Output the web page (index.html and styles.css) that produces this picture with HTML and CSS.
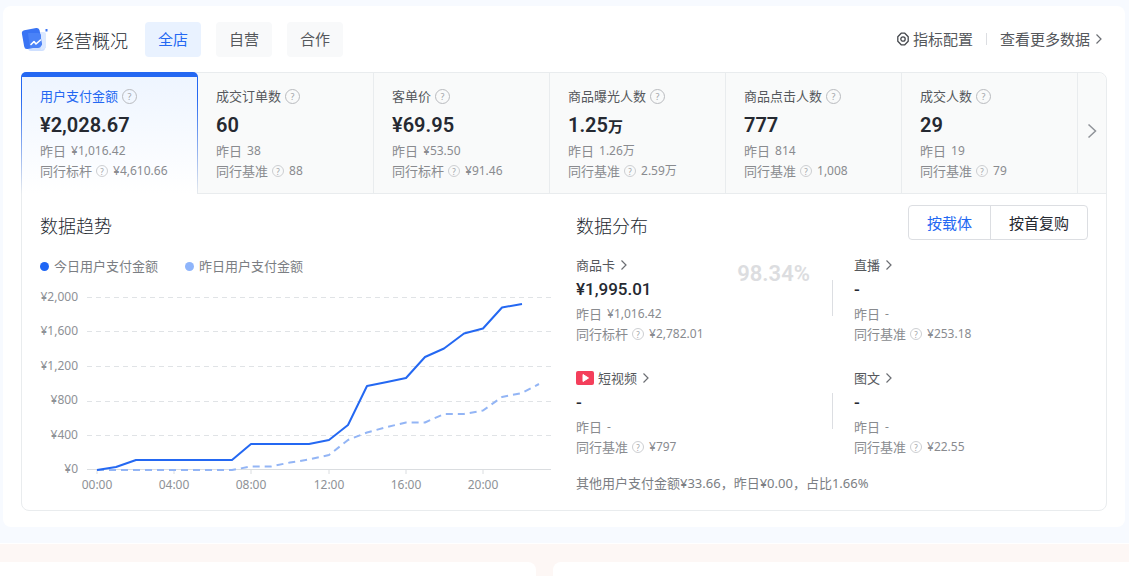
FILE: index.html
```html
<!DOCTYPE html>
<html lang="zh-CN">
<head>
    <meta charset="UTF-8">
    <meta name="viewport" content="width=device-width, initial-scale=1.0">
    <title>经营概况</title>
    <link rel="stylesheet" href="styles.css">
</head>
<body>

    <main class="page">
        <section class="overview">
            <header class="overview-header">
                <svg class="logo" viewBox="0 0 28 26" aria-hidden="true">
                    <rect x="7" y="7" width="17" height="17" rx="3" fill="#cfe0ff"/>
                    <path d="M18 5h5a2 2 0 0 1 2 2v14l-5 2z" fill="#dbe8ff"/>
                    <rect x="2" y="2" width="18" height="19" rx="3" fill="#3a74f4" transform="rotate(-10 11 12)"/>
                    <path d="M7 6h10a3 3 0 0 1 3 3v9a3 3 0 0 1-3 3H9z" fill="#4a82f7"/>
                    <path d="M10 17.500l3-3 2 2.500 4.500-4" fill="none" stroke="#fff" stroke-width="1.600" stroke-linecap="round" stroke-linejoin="round"/>
                    <rect x="24.500" y="2" width="2" height="2.500" fill="#3a74f4"/>
                </svg>
                <h1>经营概况</h1>
                <nav class="tabs">
                    <button class="tab active">全店</button>
                    <button class="tab">自营</button>
                    <button class="tab">合作</button>
                </nav>
                <div class="header-links">
                    <a href="#config">
                        <svg class="config-icon" viewBox="0 0 14 14" aria-hidden="true">
                            <path d="M5.200 1.200h3.600l3.400 3.500v4.600l-3.400 3.500H5.200L1.800 9.300V4.700z" stroke-linejoin="round"/>
                            <circle cx="7" cy="7" r="2.200"/>
                        </svg>指标配置</a>
                    <span class="split"></span>
                    <a href="#more">查看更多数据<svg class="chevron" viewBox="0 0 8 12" aria-hidden="true"><path d="M1.500 1.500L6 6l-4.500 4.500"/></svg></a>
                </div>
            </header>

            <div class="panel">
                <div class="metrics">
                    <button class="metric selected">
                        <span class="metric-name">用户支付金额<i class="help">?</i></span>
                        <span class="metric-value">¥2,028.67</span>
                        <span class="sub">昨日<b>¥1,016.42</b></span>
                        <span class="sub">同行标杆<i class="help small">?</i><b>¥4,610.66</b></span>
                    </button>
                    <button class="metric">
                        <span class="metric-name">成交订单数<i class="help">?</i></span>
                        <span class="metric-value">60</span>
                        <span class="sub">昨日<b>38</b></span>
                        <span class="sub">同行基准<i class="help small">?</i><b>88</b></span>
                    </button>
                    <button class="metric">
                        <span class="metric-name">客单价<i class="help">?</i></span>
                        <span class="metric-value">¥69.95</span>
                        <span class="sub">昨日<b>¥53.50</b></span>
                        <span class="sub">同行标杆<i class="help small">?</i><b>¥91.46</b></span>
                    </button>
                    <button class="metric">
                        <span class="metric-name">商品曝光人数<i class="help">?</i></span>
                        <span class="metric-value">1.25<span class="unit">万</span></span>
                        <span class="sub">昨日<b>1.26万</b></span>
                        <span class="sub">同行基准<i class="help small">?</i><b>2.59万</b></span>
                    </button>
                    <button class="metric">
                        <span class="metric-name">商品点击人数<i class="help">?</i></span>
                        <span class="metric-value">777</span>
                        <span class="sub">昨日<b>814</b></span>
                        <span class="sub">同行基准<i class="help small">?</i><b>1,008</b></span>
                    </button>
                    <button class="metric">
                        <span class="metric-name">成交人数<i class="help">?</i></span>
                        <span class="metric-value">29</span>
                        <span class="sub">昨日<b>19</b></span>
                        <span class="sub">同行基准<i class="help small">?</i><b>79</b></span>
                    </button>
                    <button class="next" aria-label="下一页">
                        <svg viewBox="0 0 10 16" aria-hidden="true"><path d="M1.500 1.500L8.500 8l-7 6.500"/></svg>
                    </button>
                </div>

                <div class="details">
                    <section class="trend">
                        <div class="section-head">
                            <h2>数据趋势</h2>
                        </div>
                        <div class="legend">
                            <span class="legend-item"><i class="dot"></i>今日用户支付金额</span>
                            <span class="legend-item"><i class="dot light"></i>昨日用户支付金额</span>
                        </div>
                        <svg class="chart" viewBox="0 0 512 208" role="img" aria-label="数据趋势">
                            <g class="grid">
                                <path d="M47 11.500H511"/>
                                <path d="M47 45.500H511"/>
                                <path d="M47 80.500H511"/>
                                <path d="M47 115.500H511"/>
                                <path d="M47 149.500H511"/>
                            </g>
                            <path class="axis" d="M47 183.500H511M57 184v4M134 184v4M211 184v4M289 184v4M366 184v4M443 184v4"/>
                            <g class="y-labels">
                                <text x="38" y="15">¥2,000</text>
                                <text x="38" y="49">¥1,600</text>
                                <text x="38" y="84">¥1,200</text>
                                <text x="38" y="118">¥800</text>
                                <text x="38" y="153">¥400</text>
                                <text x="38" y="187">¥0</text>
                            </g>
                            <g class="x-labels">
                                <text x="57" y="203">00:00</text>
                                <text x="134" y="203">04:00</text>
                                <text x="211" y="203">08:00</text>
                                <text x="289" y="203">12:00</text>
                                <text x="366" y="203">16:00</text>
                                <text x="443" y="203">20:00</text>
                            </g>
                            <polyline class="line yesterday" points="57,184 192,184 211,180.500 231,180.500 250,176.500 269,173.500 289,169 308,154 327,146.500 347,141 366,136.500 385,136.500 404,128 424,128 443,124.500 462,111 482,107 499,98"/>
                            <polyline class="line today" points="57,184 76,181 96,174 192,174 211,158 269,158 289,154 308,139 327,100 347,96 366,92 385,71 404,62.500 424,47.500 443,42.500 462,21.500 482,18"/>
                        </svg>
                    </section>

                    <section class="distribution">
                        <div class="section-head">
                            <h2>数据分布</h2>
                            <div class="switch">
                                <button class="on">按载体</button>
                                <button>按首复购</button>
                            </div>
                        </div>
                        <div class="stats">
                            <div class="stat">
                                <a class="stat-name" href="#card">商品卡<svg class="chevron" viewBox="0 0 8 12" aria-hidden="true"><path d="M1.500 1.500L6 6l-4.500 4.500"/></svg></a>
                                <span class="stat-value">¥1,995.01</span>
                                <span class="sub">昨日<b>¥1,016.42</b></span>
                                <span class="sub">同行标杆<i class="help small">?</i><b>¥2,782.01</b></span>
                                <span class="percent">98.34%</span>
                            </div>
                            <div class="stat">
                                <a class="stat-name" href="#live">直播<svg class="chevron" viewBox="0 0 8 12" aria-hidden="true"><path d="M1.500 1.500L6 6l-4.500 4.500"/></svg></a>
                                <span class="stat-value">-</span>
                                <span class="sub">昨日<b>-</b></span>
                                <span class="sub">同行基准<i class="help small">?</i><b>¥253.18</b></span>
                            </div>
                            <div class="stat">
                                <a class="stat-name" href="#video"><svg class="video-icon" viewBox="0 0 18 14" aria-hidden="true"><rect width="18" height="14" rx="2" fill="#f43f5b"/><path d="M7 3.500v7l5.500-3.500z" fill="#fff" stroke="#fff" stroke-linejoin="round"/></svg>短视频<svg class="chevron" viewBox="0 0 8 12" aria-hidden="true"><path d="M1.500 1.500L6 6l-4.500 4.500"/></svg></a>
                                <span class="stat-value">-</span>
                                <span class="sub">昨日<b>-</b></span>
                                <span class="sub">同行基准<i class="help small">?</i><b>¥797</b></span>
                            </div>
                            <div class="stat">
                                <a class="stat-name" href="#article">图文<svg class="chevron" viewBox="0 0 8 12" aria-hidden="true"><path d="M1.500 1.500L6 6l-4.500 4.500"/></svg></a>
                                <span class="stat-value">-</span>
                                <span class="sub">昨日<b>-</b></span>
                                <span class="sub">同行基准<i class="help small">?</i><b>¥22.55</b></span>
                            </div>
                        </div>
                        <p class="note">其他用户支付金额¥33.66，昨日¥0.00，占比1.66%</p>
                    </section>
                </div>
            </div>
        </section>
    </main>

    <div class="next-row">
        <div class="next-card"></div>
        <div class="next-card"></div>
    </div>

</body>
</html>
```

FILE: styles.css
```css
* {
    box-sizing: border-box;
}

body {
    margin: 0;
    height: 100vh;
    display: flex;
    flex-direction: column;
    overflow: hidden;
    font-family: "Noto Sans", "Noto Sans CJK SC", sans-serif;
    font-size: 13px;
    line-height: 20px;
    color: #55585c;
    background-color: #fff;
}

h1, h2, p {
    margin: 0;
}

h1, h2 {
    font-family: "Noto Sans CJK SC", sans-serif;
    font-size: 18px;
    font-weight: 300;
    line-height: 24px;
    color: #252931;
}

button {
    font-family: inherit;
    font-size: 15px;
    padding: 0;
    border: none;
    background: none;
    cursor: pointer;
}

a {
    color: inherit;
    text-decoration: none;
}

.page {
    padding: 6px 4px 16px 3px;
    background-color: #f7faff;
}

.overview {
    padding: 16px 18px;
    background-color: #fff;
    border-radius: 8px;
}

/* Header */
.overview-header {
    display: flex;
    align-items: center;
    height: 35px;
    margin-bottom: 15px;
}

.logo {
    width: 28px;
    height: 26px;
    margin-right: 7px;
}

.tabs {
    display: flex;
    gap: 15px;
    margin-left: 17px;
}

.tab {
    height: 35px;
    padding: 0 13px 2px;
    border-radius: 4px;
    color: #55585c;
    background-color: #f8f9fa;
}

.tab.active {
    color: #2468f2;
    background-color: #e9f2ff;
}

.header-links {
    display: flex;
    align-items: center;
    gap: 13px;
    margin-left: auto;
    padding: 0 4px 2px 0;
    font-size: 15px;
}

.header-links a {
    display: flex;
    align-items: center;
}

.config-icon {
    width: 14px;
    height: 14px;
    margin-right: 3px;
    fill: none;
    stroke: #45484d;
    stroke-width: 1.300;
}

.split {
    width: 1px;
    height: 12px;
    background-color: #dcdee2;
}

.chevron {
    width: 8px;
    height: 12px;
    margin-left: 5px;
    fill: none;
    stroke: #6b6e73;
    stroke-width: 1.200;
}

/* Metric cards */
.panel {
    border: 1px solid #e9ecee;
    border-radius: 8px;
}

.metrics {
    display: flex;
}

.metric {
    flex: 1;
    display: flex;
    flex-direction: column;
    padding: 13px 0 12px 18px;
    font-size: 13px;
    line-height: 20px;
    text-align: left;
    background-color: #f9fafa;
    border-right: 1px solid #e9ecee;
    border-bottom: 1px solid #e9ecee;
}

.metric.selected {
    margin: -1px 0 0 -1px;
    padding-top: 9px;
    border: 1px solid transparent;
    border-top-width: 5px;
    border-bottom: none;
    border-radius: 5px 5px 0 0;
    background: linear-gradient(#eef5ff, #fff) padding-box, linear-gradient(#2468f2 20%, #e9ecee) border-box;
}

.metric-name {
    display: flex;
    align-items: center;
    color: #55585c;
}

.selected .metric-name {
    color: #2468f2;
}

.metric-value {
    margin: 7px 0 3px;
    font-family: Roboto, "Noto Sans CJK SC", sans-serif;
    font-size: 20px;
    font-weight: 600;
    line-height: 25px;
    color: #252931;
}

.unit {
    font-size: 15px;
    line-height: 15px;
}

.help {
    display: inline-flex;
    align-items: center;
    justify-content: center;
    width: 15px;
    height: 15px;
    margin-left: 4px;
    border: 1px solid #b9bbbf;
    border-radius: 50%;
    font-size: 9px;
    font-style: normal;
    line-height: 9px;
    color: #a0a3a8;
}

.help.small {
    width: 12px;
    height: 12px;
    border-color: #cdcfd2;
    font-size: 8px;
}

.sub {
    display: flex;
    align-items: center;
    height: 20px;
    color: #898b8f;
}

.sub b {
    margin-left: 5px;
    font-size: 12px;
    font-weight: 400;
}

.next {
    width: 28px;
    background-color: #f9fafa;
    border-bottom: 1px solid #e9ecee;
    border-radius: 0 8px 0 0;
}

.next svg {
    width: 10px;
    height: 16px;
    fill: none;
    stroke: #909399;
    stroke-width: 1.500;
}

/* Trend and distribution */
.details {
    display: grid;
    grid-template-columns: 1fr 1fr;
    gap: 24px;
    padding: 11px 18px 16px;
}

.section-head {
    display: flex;
    align-items: center;
    justify-content: space-between;
    height: 35px;
}

.section-head h2 {
    padding-top: 5px;
}

.legend {
    display: flex;
    gap: 27px;
    margin: 16px 0 10px;
    color: #7b7e83;
}

.legend-item {
    display: flex;
    align-items: center;
}

.dot {
    width: 9px;
    height: 9px;
    margin-right: 5px;
    border-radius: 50%;
    background-color: #1f66f5;
}

.dot.light {
    background-color: #8fb5fb;
}

.chart {
    display: block;
    width: 100%;
}

.chart text {
    font-size: 12px;
    fill: #8e9196;
}

.y-labels {
    text-anchor: end;
}

.x-labels {
    text-anchor: middle;
}

.grid path {
    stroke: #e0e3e6;
    stroke-dasharray: 5 4;
}

.axis {
    fill: none;
    stroke: #dadde0;
}

.line {
    fill: none;
    stroke-width: 2;
    stroke-linejoin: round;
}

.today {
    stroke: #2468f2;
}

.yesterday {
    stroke: #93b5f5;
    stroke-dasharray: 7 5;
}

.switch {
    display: flex;
    height: 35px;
    border: 1px solid #dcdee2;
    border-radius: 4px;
}

.switch button {
    padding: 0 18px;
    color: #252931;
}

.switch .on {
    color: #2468f2;
    border-right: 1px solid #dcdee2;
}

.stats {
    display: grid;
    grid-template-columns: 1fr 1fr;
    row-gap: 24px;
    margin-top: 15px;
}

.stat {
    position: relative;
    display: flex;
    flex-direction: column;
}

.stat:nth-child(even) {
    padding-left: 22px;
}

.stat:nth-child(even)::before {
    content: "";
    position: absolute;
    left: 0;
    top: 25px;
    width: 1px;
    height: 36px;
    background-color: #dcdee2;
}

.stat-name {
    display: flex;
    align-items: center;
}

.video-icon {
    width: 18px;
    height: 14px;
    margin-right: 4px;
}

.stat-value {
    margin: 2px 0;
    font-family: Roboto, sans-serif;
    font-size: 17px;
    font-weight: 500;
    line-height: 25px;
    color: #252931;
}

/* Share of the total, laid over the first stat */
.percent {
    position: absolute;
    top: 7px;
    right: 22px;
    font-family: Roboto, sans-serif;
    font-size: 22px;
    font-weight: 600;
    line-height: 24px;
    color: #dcdde0;
}

.note {
    margin-top: 16px;
    color: #7b7e83;
}

/* Top edge of the following row */
.next-row {
    flex: 1;
    display: grid;
    grid-template-columns: 536fr 576fr;
    column-gap: 17px;
    margin-top: 1px;
    padding-top: 18px;
    background-color: #fdf7f5;
}

.next-card {
    background-color: #fff;
    border-radius: 0 8px 0 0;
}

.next-card:last-child {
    border-radius: 8px 0 0 0;
}
```
